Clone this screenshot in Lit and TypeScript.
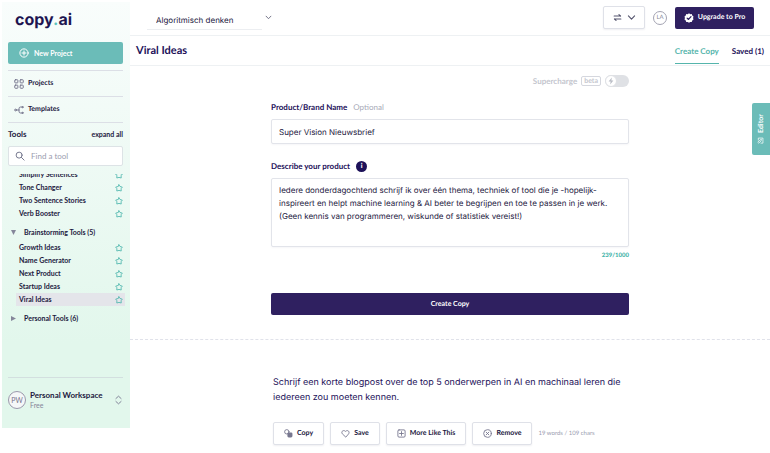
import { LitElement, html, css, svg, nothing } from "lit";
import { customElement, property, state } from "lit/decorators.js";
import { classMap } from "lit/directives/class-map.js";

const icons: Record<string, unknown> = {
  plusCircle: svg`<circle cx="8" cy="8" r="6.6"/><path d="M8 4.8v6.4M4.8 8h6.4"/>`,
  grid: svg`<rect x="1.2" y="1.2" width="5" height="5" rx="1"/><rect x="9.8" y="1.2" width="5" height="5" rx="1"/><rect x="1.2" y="9.8" width="5" height="5" rx="1"/><rect x="9.8" y="9.8" width="5" height="5" rx="1"/>`,
  branch: svg`<circle cx="2.4" cy="8" r="1.4"/><path d="M4 8h4M13 3.2h-2.5Q8 3.2 8 6v4q0 2.8 2.5 2.8H13"/><circle cx="13.6" cy="3.4" r="1"/><circle cx="13.6" cy="12.6" r="1"/>`,
  search: svg`<circle cx="6.6" cy="6.6" r="4.8"/><path d="M10.2 10.2L14.6 14.6"/>`,
  star: svg`<path d="M8 1.6L10 5L14.6 6.2L12.2 9.4L12.4 14L8 12.8L3.6 14L3.8 9.4L1.4 6.2L6 5Z"/>`,
  updown: svg`<path d="M3.4 5.4L8 1.2L12.6 5.4M3.4 10.6L8 14.8L12.6 10.6"/>`,
  chevron: svg`<path d="M2.5 5L8 10.8L13.5 5"/>`,
  swap: svg`<path d="M2 5.4H13M3 10.6H14M10.6 3L13.4 5.4M5.4 13L2.6 10.6"/>`,
  badge: svg`<path class="solid" d="M8 .4L10 1.8L12.4 1.7L13.2 4L15.2 5.4L14.5 8L15.2 10.5L13.2 12L12.4 14.2L10 14.2L8 15.6L6 14.2L3.6 14.2L2.8 12L.8 10.5L1.5 8L.8 5.4L2.8 4L3.6 1.7L6 1.8Z"/><path class="tick" d="M5 8.2L7.2 10.3L11.2 5.8"/>`,
  bolt: svg`<path class="solid" d="M9.6 1L3.2 9H7.2L6.4 15L12.8 7H8.8Z"/>`,
  copy: svg`<circle cx="5" cy="5" r="3.9"/><rect class="solid" x="6" y="6" width="9" height="9" rx="2.5"/>`,
  heart: svg`<path d="M8 14L2.4 8.6C-.4 5.4 3.6 .4 8 4.2C12.4 .4 16.4 5.4 13.6 8.6Z"/>`,
  plusBox: svg`<rect x="1.6" y="1.6" width="12.8" height="12.8" rx="2"/><path d="M8 4.6v6.8M4.6 8h6.8"/>`,
  remove: svg`<circle cx="8" cy="8" r="6.8"/><path d="M5.6 5.6l4.8 4.8M10.4 5.6L5.6 10.4"/>`,
  edit: svg`<path d="M7 2H2.4v11.6H13V9M6 10l.8-3L12 1.8L14.2 4L9 9.2Z"/>`,
};

@customElement("app-icon")
export class AppIcon extends LitElement {
  @property() name = "";
  static styles = css`
    :host { display: inline-flex; flex: none; width: 10px; height: 10px; }
    svg { width: 100%; height: 100%; fill: none; stroke: currentColor; stroke-width: var(--stroke, 1.6); stroke-linecap: round; stroke-linejoin: round; }
    .solid { fill: currentColor; stroke: none; }
    .tick { stroke: #2f2060; stroke-width: 2; }
  `;
  render() {
    return html`<svg viewBox="0 0 16 16" aria-hidden="true">${icons[this.name] ?? nothing}</svg>`;
  }
}

@customElement("side-bar")
export class SideBar extends LitElement {
  @state() private active = "Viral Ideas";
  static styles = css`
    :host { display: flex; flex-direction: column; box-sizing: border-box; padding: 0 7px 0 6px; background: linear-gradient(#f9fdfc, #effaf5 35%, #e2f7ec 80%); color: #1c1840; font-size: 7px; line-height: 13px; }
    * { box-sizing: border-box; }
    button, input { font: inherit; color: inherit; }
    button { border: 0; background: none; padding: 0; text-align: left; cursor: pointer; }
    .logo { margin: 6px 0 0 7px; height: 22px; font: 700 16px/22px Inter, sans-serif; color: #1d1450; }
    .logo span { color: #5cc4bb; }
    .new { display: flex; align-items: center; gap: 5px; height: 22px; margin-top: 12px; padding: 0 11px; border-radius: 2px; background: #6bbcb8; color: #fff; font-weight: 700; }
    nav { margin-top: 6px; border-top: 1px solid #dcdfe6; }
    nav a { display: flex; align-items: center; gap: 4px; height: 26px; padding-left: 6px; border-bottom: 1px solid #dcdfe6; color: inherit; text-decoration: none; font-weight: 700; }
    nav app-icon { color: #77778f; }
    .head { display: flex; justify-content: space-between; align-items: center; height: 23px; font-weight: 700; }
    h2 { margin: 0; font-size: 8px; }
    .search { display: flex; align-items: center; gap: 6px; height: 20px; padding: 0 6px; border: 1px solid #dde3e6; border-radius: 2px; background: #fff; color: #777a90; }
    .search input { width: 100%; min-width: 0; border: 0; padding: 0; outline: 0; background: none; font-size: 8px; }
    .search input::placeholder { color: #9a9daf; opacity: 1; }
    .list { flex: 1 0 0; min-height: 150px; margin-top: 8px; margin-right: -2px; overflow: hidden; font-weight: 700; }
    ul { margin: 0; padding: 0; list-style: none; }
    .scrolled { margin-top: -6px; }
    li { display: flex; justify-content: space-between; align-items: center; height: 13px; margin-left: 8px; padding: 0 2px 0 3px; }
    li.on { background: #e4e5ea; }
    li button { display: flex; }
    li app-icon { width: 8px; height: 8px; color: #45b3a9; }
    .group { display: flex; align-items: center; gap: 8px; height: 17px; margin: 4px 0 0 3px; }
    .tri { width: 5px; height: 5px; background: #85869a; clip-path: polygon(0 0, 100% 0, 50% 100%); }
    .shut .tri { clip-path: polygon(0 0, 100% 50%, 0 100%); }
    .space { display: flex; align-items: center; gap: 4px; margin-top: 6px; padding: 12px 0 18px; border-top: 1px solid #d3dfdf; width: 100%; }
    .pic { flex: none; width: 18px; height: 18px; border: 1px solid #9b98ab; border-radius: 50%; background: #f5f7f8; color: #77738b; line-height: 16px; text-align: center; }
    .who { flex: 1; line-height: 10px; color: #85869a; }
    .who b { display: block; color: #1c1840; font-size: 8px; white-space: nowrap; }
    .space app-icon { width: 9px; color: #77778f; }
  `;
  private row = (t: string) => html`<li class=${classMap({ on: t === this.active })}>
    <button @click=${() => (this.active = t)}>${t}</button>
    <button aria-label="Favourite ${t}"><app-icon name="star"></app-icon></button>
  </li>`;
  render() {
    return html`
      <div class="logo">copy<span>.</span>ai</div>
      <button class="new"><app-icon name="plusCircle"></app-icon>New Project</button>
      <nav>
        <a href="#projects"><app-icon name="grid"></app-icon>Projects</a>
        <a href="#templates"><app-icon name="branch"></app-icon>Templates</a>
      </nav>
      <div class="head"><h2>Tools</h2><button>expand all</button></div>
      <label class="search"><app-icon name="search"></app-icon><input type="search" placeholder="Find a tool" aria-label="Find a tool" /></label>
      <div class="list">
        <ul class="scrolled">${["Simplify Sentences", "Tone Changer", "Two Sentence Stories", "Verb Booster"].map(this.row)}</ul>
        <button class="group"><span class="tri"></span>Brainstorming Tools (5)</button>
        <ul>${["Growth Ideas", "Name Generator", "Next Product", "Startup Ideas", "Viral Ideas"].map(this.row)}</ul>
        <button class="group shut"><span class="tri"></span>Personal Tools (6)</button>
      </div>
      <button class="space"><span class="pic">PW</span><span class="who"><b>Personal Workspace</b>Free</span><app-icon name="updown"></app-icon></button>
    `;
  }
}

@customElement("app-root")
export class AppRoot extends LitElement {
  @state() private text =
    "Iedere donderdagochtend schrijf ik over één thema, techniek of tool die je -hopelijk- inspireert en helpt machine learning & AI beter te begrijpen en toe te passen in je werk. (Geen kennis van programmeren, wiskunde of statistiek vereist!)";
  static styles = css`
    :host { display: grid; grid-template-columns: 128px minmax(0, 1fr); min-height: 100vh; padding-left: 2px; box-sizing: border-box; background: #fff; color: #1c1840; font: 8px/13px Lato, sans-serif; text-rendering: geometricPrecision; }
    * { box-sizing: border-box; }
    button, input, textarea, select { font: inherit; color: inherit; text-rendering: inherit; }
    button { cursor: pointer; padding: 0; }
    side-bar { margin: 2px 0 25px; }
    .top { display: flex; align-items: center; height: 36px; padding: 0 16px 0 17px; border-bottom: 1px solid #eef1f3; }
    .pick { display: flex; align-items: center; gap: 3px; margin-right: auto; color: #66667c; }
    .pick select { width: 115px; height: 18px; margin-top: 7px; appearance: none; border: 0; border-bottom: 1px solid #eceef1; padding: 0 9px; background: none; outline: 0; color: #1c1840; font-family: Inter, sans-serif; }
    .box { display: flex; align-items: center; justify-content: center; gap: 5px; border: 1px solid #dfe1e8; border-radius: 2px; background: #fff; box-shadow: 0 1px 2px #1c184012; }
    .pick app-icon { width: 7px; height: 7px; --stroke: 2; }
    .lang { width: 42px; height: 23px; color: #55556e; --stroke: 2; }
    .lang app-icon { width: 9px; height: 9px; }
    .me { width: 14px; height: 14px; margin: 0 8px; border: 1px solid #a3a3b2; border-radius: 50%; color: #8a8a9c; font-size: 6px; line-height: 12px; text-align: center; }
    .pro { display: flex; align-items: center; justify-content: center; gap: 4px; width: 79px; height: 22px; border: 0; border-radius: 2px; background: #2f2060; color: #fff; font-size: 7px; font-weight: 700; }
    .bar { display: flex; align-items: stretch; height: 30px; padding: 0 6px; border-bottom: 1px solid #eef1f3; color: #1d1159; }
    h1 { flex: 1; margin: 0; font-size: 11px; line-height: 30px; }
    .tab { margin-left: 13px; height: 28px; border-bottom: 1px solid transparent; color: inherit; text-decoration: none; font-weight: 700; line-height: 30px; }
    .tab.on { color: #55b5ac; border-color: #55b5ac; }
    .col { max-width: 358px; margin: 0 auto; }
    .super { display: flex; align-items: center; justify-content: flex-end; gap: 4px; height: 30px; color: #c4c6ce; font-weight: 700; }
    .tag { border: 1px solid #d5d7de; border-radius: 2px; padding: 0 2px; font-size: 7px; line-height: 8px; }
    .switch { display: flex; width: 24px; height: 12px; border-radius: 6px; background: #dfe1e5; }
    .switch input { position: absolute; opacity: 0; margin: 0; }
    .knob { display: flex; align-items: center; justify-content: center; width: 12px; height: 12px; border: 1px solid #dfe1e5; border-radius: 50%; background: #fff; color: #b9bcc5; }
    .knob app-icon { width: 8px; height: 8px; }
    .label { display: flex; align-items: center; gap: 6px; height: 23px; color: #1d1159; font-weight: 700; }
    .label span { color: #a8aab8; font-weight: 400; }
    .info { display: grid; place-items: center; width: 11px; height: 11px; border: 0; border-radius: 50%; background: #1d1159; color: #fff; font-size: 7px; font-weight: 900; line-height: 11px; }
    .field { display: block; width: 100%; border: 1px solid #e2e4ea; border-radius: 2px; padding: 5px 7px; background: #fff; outline: 0; resize: none; box-shadow: 0 1px 2px #1c18400a; font-family: Inter, sans-serif; }
    .one { height: 25px; margin-bottom: 11px; }
    .many { height: 69px; overflow: hidden; }
    .count { height: 46px; padding-top: 2px; color: #45b3a9; font-size: 6px; font-weight: 900; text-align: right; }
    .go { display: block; width: 100%; height: 22px; border: 0; border-radius: 2px; background: #2f2060; color: #fff; font-size: 7px; font-weight: 700; }
    .result { margin-top: 24px; border-top: 1px dashed #e0e2ea; padding-top: 35px; }
    .result .col { padding-left: 2px; }
    p { margin: 0; color: #1d1159; font: 9px/15px Inter, sans-serif; }
    .acts { display: flex; align-items: center; gap: 6px; margin-top: 17px; color: #9a9daf; font-size: 6px; white-space: nowrap; }
    .acts button { height: 23px; padding: 0 10px; gap: 4px; color: #1c1840; font-size: 7px; font-weight: 700; }
    .acts app-icon { width: 9px; height: 9px; color: #77778f; }
    .editor { position: absolute; top: 103px; right: 0; display: flex; align-items: center; justify-content: center; gap: 4px; width: 18px; height: 52px; border: 0; border-radius: 0 2px 2px 0; background: #6bbcb8; color: #fff; font-size: 7px; font-weight: 700; writing-mode: vertical-rl; transform: rotate(180deg); }
    .editor app-icon { width: 7px; height: 7px; }
  `;
  render() {
    return html`
      <side-bar></side-bar>
      <main>
        <header class="top">
          <label class="pick"><select aria-label="Project"><option>Algoritmisch denken</option></select><app-icon name="chevron"></app-icon></label>
          <button class="box lang" aria-label="Language"><app-icon name="swap"></app-icon><app-icon name="chevron"></app-icon></button>
          <div class="me">LA</div>
          <button class="pro"><app-icon name="badge"></app-icon>Upgrade to Pro</button>
        </header>
        <div class="bar"><h1>Viral Ideas</h1><a class="tab on" href="#create">Create Copy</a><a class="tab" href="#saved">Saved (1)</a></div>
        <form class="col" @submit=${(e: Event) => e.preventDefault()}>
          <label class="super">Supercharge <span class="tag">beta</span><span class="switch"><input type="checkbox" /><span class="knob"><app-icon name="bolt"></app-icon></span></span></label>
          <label class="label" for="name">Product/Brand Name <span>Optional</span></label>
          <input class="field one" id="name" value="Super Vision Nieuwsbrief" />
          <div class="label"><label for="about">Describe your product</label><button type="button" class="info" aria-label="Information">i</button></div>
          <textarea class="field many" id="about" spellcheck="false" .value=${this.text} @input=${(e: Event) => (this.text = (e.target as HTMLTextAreaElement).value)}></textarea>
          <div class="count">239/1000</div>
          <button class="go">Create Copy</button>
        </form>
        <section class="result">
          <div class="col">
            <p>Schrijf een korte blogpost over de top 5 onderwerpen in AI en machinaal leren die iedereen zou moeten kennen.</p>
            <div class="acts">
              <button class="box"><app-icon name="copy"></app-icon>Copy</button>
              <button class="box"><app-icon name="heart"></app-icon>Save</button>
              <button class="box"><app-icon name="plusBox"></app-icon>More Like This</button>
              <button class="box"><app-icon name="remove"></app-icon>Remove</button>
              <span>19 words / 109 chars</span>
            </div>
          </div>
        </section>
      </main>
      <button class="editor"><app-icon name="edit"></app-icon>Editor</button>
    `;
  }
}
